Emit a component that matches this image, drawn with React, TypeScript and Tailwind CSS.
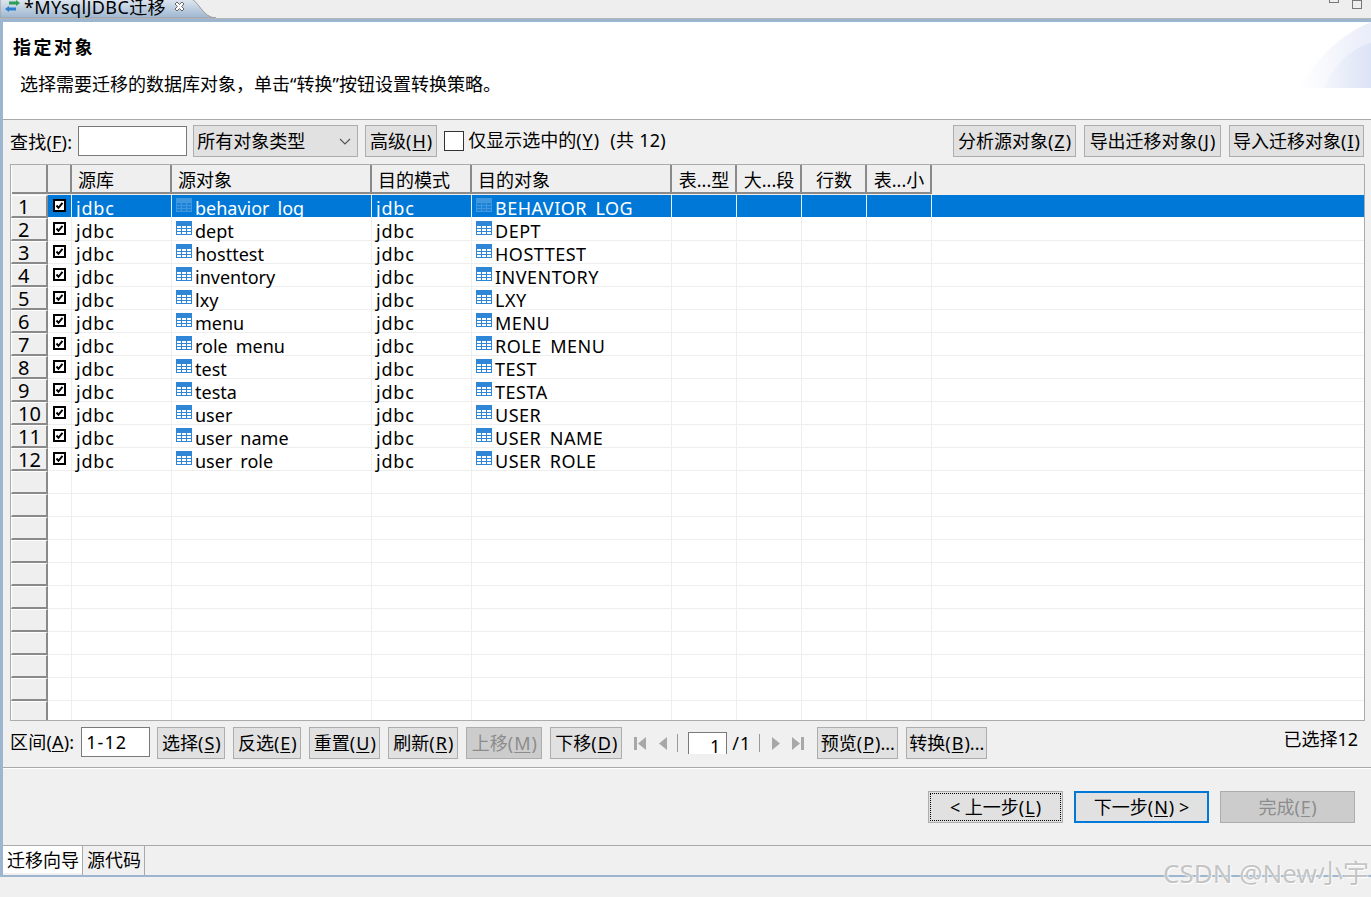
import { Fragment } from 'react';

const FONT = '"Noto Sans", "Noto Sans CJK SC", sans-serif';

const COLUMNS = [
  { label: '源库', w: 'w-[100px]' },
  { label: '源对象', w: 'w-[200px]' },
  { label: '目的模式', w: 'w-[100px]' },
  { label: '目的对象', w: 'w-[200px]' },
  { label: '表...型', w: 'w-[65px]', center: true },
  { label: '大...段', w: 'w-[65px]', center: true },
  { label: '行数', w: 'w-[65px]', center: true },
  { label: '表...小', w: 'w-[65px]', center: true },
];

const TABLES = [
  'behavior_log', 'dept', 'hosttest', 'inventory', 'lxy', 'menu',
  'role_menu', 'test', 'testa', 'user', 'user_name', 'user_role',
];

function TableIcon({ faded }: { faded?: boolean }) {
  return (
    <svg width="16" height="14" viewBox="0 0 16 14" className="shrink-0">
      <rect width="16" height="14" fill={faded ? '#3f97e0' : '#2f86d6'} />
      {[5, 8, 11].map(y => [1, 6, 11].map(x => (
        <rect key={`${x}-${y}`} x={x} y={y} width="4" height="2" fill={faded ? '#1b82da' : '#ffffff'} />
      )))}
    </svg>
  );
}

function Check() {
  return (
    <svg width="13" height="13" viewBox="0 0 13 13" className="shrink-0 bg-white">
      <rect x="1" y="1" width="11" height="11" fill="none" stroke="#000" strokeWidth="2" />
      <path d="M3.5 6.5 L5.5 8.8 L9.5 3.8" fill="none" stroke="#000" strokeWidth="2" />
    </svg>
  );
}

function Btn({ children, className = '', disabled, primary }: { children: React.ReactNode; className?: string; disabled?: boolean; primary?: boolean }) {
  return (
    <div className={`flex items-center justify-center h-[32px] whitespace-nowrap ${primary ? 'border-2 border-[#0078d7]' : 'border border-[#adadad]'} ${disabled ? 'bg-[#cccccc] text-[#8c8c8c]' : 'bg-[#e1e1e1] text-black'} ${className}`}>
      {children}
    </div>
  );
}

function Key({ k }: { k: string }) {
  return <>(<span className="underline underline-offset-2 px-[1px]">{k}</span>)</>;
}

function Pager({ d, className = '' }: { d: 'first' | 'prev' | 'next' | 'last'; className?: string }) {
  const shapes = {
    first: { w: 12, path: 'M0 0h3v13H0z M12 0v13L4 6.5z' },
    prev: { w: 8, path: 'M8 0v13L0 6.5z' },
    next: { w: 8, path: 'M0 0v13l8-6.5z' },
    last: { w: 12, path: 'M12 0H9v13h3z M0 0v13l8-6.5z' },
  };
  const s = shapes[d];
  return (
    <svg width={s.w} height="13" viewBox={`0 0 ${s.w} 13`} className={`shrink-0 mt-[10px] ${className}`}>
      <path d={s.path} fill="#a8a8a8" />
    </svg>
  );
}

export default function App() {
  const rowNums = Array.from({ length: 23 }, (_, i) => i);
  return (
    <div className="relative w-[1371px] h-[897px] overflow-hidden bg-[#f0f0f0] text-[18px] text-black flex flex-col" style={{ fontFamily: FONT }}>
      {/* editor tab strip */}
      <div className="h-[19px] flex items-end justify-between bg-[#eeeeee] border-b border-[#b5b5b5] shrink-0">
        <div className="relative h-[19px] w-[220px] overflow-hidden">
          <svg width="220" height="19" viewBox="0 0 220 19" className="absolute left-0 top-0">
            <defs>
              <linearGradient id="tabFill" x1="0" y1="0" x2="0" y2="1">
                <stop offset="0" stopColor="#e3eaf2" />
                <stop offset="1" stopColor="#9db6d0" />
              </linearGradient>
            </defs>
            <path d="M0 -1 H188 C198 -1 202 19 216 19 H0 Z" fill="url(#tabFill)" stroke="#9a9a9a" />
          </svg>
          <svg width="17" height="12" viewBox="0 0 17 12" className="absolute left-[4px] top-[1px]">
            <path d="M5 1.5h7V0l4 3-4 3V4.5H5z" fill="#2f9e55" />
            <path d="M12 7.5H5V6L1 9l4 3v-1.500h7z" fill="#2f7fd0" />
          </svg>
          <span className="absolute left-[24px] top-[-5px] leading-[26px] whitespace-nowrap tracking-[0.4px]">*MYsqlJDBC迁移</span>
          <svg width="11" height="11" viewBox="0 0 11 11" className="absolute left-[174px] top-[2px]">
            <path d="M1 3l2-2 2.5 2.5L8 1l2 2-2.5 2.5L10 8 8 10 5.5 7.5 3 10 1 8l2.5-2.5z" fill="#ffffff" stroke="#666" strokeWidth="1" />
          </svg>
        </div>
        <div className="flex items-start gap-[13px] pr-[9px] h-[19px]">
          <div className="w-[10px] h-[4px] border border-[#777] border-t-0" />
          <div className="w-[10px] h-[10px] border border-[#777] border-t-0">
            <div className="h-[2px] border-b border-[#777]" />
          </div>
        </div>
      </div>

      <div className="flex-none h-[858px] border-l-[3px] border-b-[2px] border-t-[3px] border-[#9db6d0] flex flex-col">
        {/* wizard banner */}
        <div className="relative h-[98px] bg-white border-b border-[#a9a9a9] shrink-0 pl-[10px] pt-[13px] overflow-hidden">
          <div className="font-bold leading-[25px] tracking-[2.5px]">指定对象</div>
          <div className="mt-[12px] pl-[7px] leading-[25px]">选择需要迁移的数据库对象，单击“转换”按钮设置转换策略。</div>
          <svg width="72" height="66" viewBox="0 0 72 66" className="absolute right-0 top-0">
            <defs>
              <linearGradient id="bannerOuter" x1="0" y1="0" x2="1" y2="0">
                <stop offset="0" stopColor="#ffffff" />
                <stop offset="1" stopColor="#e9edf9" />
              </linearGradient>
              <linearGradient id="bannerInner" x1="0" y1="0" x2="1" y2="0">
                <stop offset="0" stopColor="#f4f6fc" />
                <stop offset="1" stopColor="#dde3f6" />
              </linearGradient>
            </defs>
            <path d="M0 66 C18 36 42 12 72 0 V66 Z" fill="url(#bannerOuter)" />
            <path d="M25 66 C34 44 50 27 72 21 V66 Z" fill="url(#bannerInner)" />
          </svg>
        </div>

        {/* filter bar */}
        <div className="h-[44px] flex items-start pt-[5px] pl-[7px] pr-[7px] shrink-0">
          <span className="mt-[5px] leading-[25px] whitespace-nowrap tracking-[0.2px]">查找(<span className="underline underline-offset-2">F</span>):</span>
          <div className="ml-[6px] mt-[1px] w-[109px] h-[30px] bg-white border border-[#7a7a7a]" />
          <div className="ml-[6px] w-[165px] h-[32px] bg-[#e1e1e1] border border-[#adadad] flex items-center justify-between pl-[3px] pr-[6px]">
            <span>所有对象类型</span>
            <svg width="12" height="7" viewBox="0 0 12 7"><path d="M1 1l5 5 5-5" fill="none" stroke="#555" strokeWidth="1.2" /></svg>
          </div>
          <Btn className="ml-[7px] w-[72px]">高级<Key k="H" /></Btn>
          <div className="ml-[7px] mt-[6px] w-[20px] h-[20px] bg-white border border-[#333]" />
          <span className="ml-[4px] mt-[3px] leading-[25px] whitespace-nowrap">仅显示选中的<Key k="Y" /></span>
          <span className="ml-[11px] mt-[3px] leading-[25px] whitespace-nowrap tracking-[0.3px]">(共 12)</span>
          <div className="ml-auto flex gap-[8px]">
            <Btn className="w-[123px]">分析源对象<Key k="Z" /></Btn>
            <Btn className="w-[137px]">导出迁移对象<Key k="J" /></Btn>
            <Btn className="w-[135px]">导入迁移对象<Key k="I" /></Btn>
          </div>
        </div>

        {/* object grid */}
        <div className="mx-[7px] w-[1355px] h-[557px] border border-[#ababab] bg-white overflow-hidden shrink-0">
          <div className="flex h-[30px] bg-[#efefef] border-l border-white">
            <div className="w-[36px] h-[29px] border-r-2 border-b-2 border-[#8a8a8a]" />
            <div className="w-[24px] h-[29px] border-r-2 border-b-2 border-[#8a8a8a]" />
            {COLUMNS.map(c => (
              <div key={c.label} className={`${c.w} h-[29px] border-r-2 border-b-2 border-[#8a8a8a] leading-[31px] whitespace-nowrap ${c.center ? 'text-center pl-[1px]' : 'pl-[6px]'}`}>
                {c.label}
              </div>
            ))}
          </div>
          {rowNums.map(i => {
            const t = TABLES[i];
            const sel = i === 0;
            const cell = `h-[23px] border-r ${sel ? 'border-[#e8f0f8]' : 'border-[#eeeeee]'}`;
            return (
              <div key={i} className={`flex h-[23px] border-b ${sel ? 'border-white bg-[#0078d7] text-white' : 'border-[#eeeeee]'}`}>
                <div className="w-[37px] h-[23px] shrink-0 bg-[#efefef] text-black text-[20px] border-l border-t border-white border-r-2 border-b-2 border-r-[#8a8a8a] border-b-[#8a8a8a] pl-[6px] leading-[22px]">
                  {t ? i + 1 : ''}
                </div>
                <div className={`${cell} w-[24px] shrink-0 flex justify-center pt-[4px]`}>
                  {t && <Check />}
                </div>
                {COLUMNS.map((c, j) => {
                  let content: React.ReactNode = null;
                  if (t) {
                    if (j === 0 || j === 2) content = <span className="pl-[4px] tracking-[0.8px]">jdbc</span>;
                    if (j === 1 || j === 3) {
                      const [a, b] = (j === 1 ? t : t.toUpperCase()).split('_');
                      content = (
                        <Fragment>
                          <span className="pl-[4px] pr-[3px] inline-flex align-[3px]"><TableIcon faded={sel} /></span>
                          <span className={j === 3 ? 'tracking-[0.5px]' : ''}>
                            {a}
                            {b && <><span className="text-transparent">_</span>{b}</>}
                          </span>
                        </Fragment>
                      );
                    }
                  }
                  return (
                    <div key={c.label} className={`${cell} ${c.w} shrink-0 leading-[26px] whitespace-nowrap`}>
                      {content}
                    </div>
                  );
                })}
                <div className="flex-1" />
              </div>
            );
          })}
        </div>

        {/* selection bar */}
        <div className="h-[47px] border-b border-[#a9a9a9] flex items-start pt-[6px] pl-[7px] shrink-0">
          <span className="mt-[3px] leading-[25px] whitespace-nowrap tracking-[0.2px]">区间(<span className="underline underline-offset-2">A</span>):</span>
          <div className="ml-[7px] w-[69px] h-[30px] bg-white border border-[#7a7a7a] pl-[4px] leading-[28px] tracking-[1px]">1-12</div>
          <Btn className="ml-[7px] w-[68px]">选择<Key k="S" /></Btn>
          <Btn className="ml-[8px] w-[68px]">反选<Key k="E" /></Btn>
          <Btn className="ml-[8px] w-[71px]">重置<Key k="U" /></Btn>
          <Btn className="ml-[8px] w-[70px]">刷新<Key k="R" /></Btn>
          <Btn className="ml-[8px] w-[76px]" disabled>上移<Key k="M" /></Btn>
          <Btn className="ml-[8px] w-[72px]">下移<Key k="D" /></Btn>
          <Pager d="first" className="ml-[12px]" />
          <Pager d="prev" className="ml-[13px]" />
          <div className="ml-[10px] mt-[7px] w-px h-[18px] bg-[#999]" />
          <div className="ml-[10px] mt-[5px] w-[39px] h-[22px] bg-white border border-b-0 border-[#7a7a7a] text-right pr-[6px] leading-[26px] overflow-hidden">1</div>
          <span className="ml-[5px] mt-[4px] leading-[25px] tracking-[1px]">/1</span>
          <div className="ml-[8px] mt-[7px] w-px h-[18px] bg-[#999]" />
          <Pager d="next" className="ml-[12px]" />
          <Pager d="last" className="ml-[12px]" />
          <Btn className="ml-[13px] w-[81px]">预览<Key k="P" />...</Btn>
          <Btn className="ml-[8px] w-[81px]">转换<Key k="B" />...</Btn>
          <span className="ml-auto mr-[13px] mt-0 leading-[25px] whitespace-nowrap">已选择12</span>
        </div>

        {/* wizard buttons */}
        <div className="h-[78px] border-b border-[#a9a9a9] flex items-start justify-end gap-[11px] pt-[22px] pr-[16px] shrink-0 border-t border-t-white">
          <Btn className="w-[135px] outline-1 outline-dotted outline-black -outline-offset-3">&lt; 上一步<Key k="L" /></Btn>
          <Btn className="w-[135px]" primary>下一步<Key k="N" /> &gt;</Btn>
          <Btn className="w-[135px]" disabled>完成<Key k="F" /></Btn>
        </div>

        {/* page tabs */}
        <div className="flex h-[29px] shrink-0">
          <div className="w-[79px] h-[27px] bg-white pl-[4px] leading-[28px] whitespace-nowrap">迁移向导</div>
          <div className="w-[63px] h-[29px] border-l border-r border-[#a9a9a9] pl-[4px] leading-[28px] whitespace-nowrap">源代码</div>
        </div>
      </div>

      {/* CSDN watermark */}
      <div className="absolute left-[1163px] top-[856px] text-[26px] leading-[34px] text-[#c4c4c4] whitespace-nowrap [text-shadow:0_0_2px_#ffffff,1px_1px_1px_#ffffff]">CSDN @New小宇</div>
    </div>
  );
}
